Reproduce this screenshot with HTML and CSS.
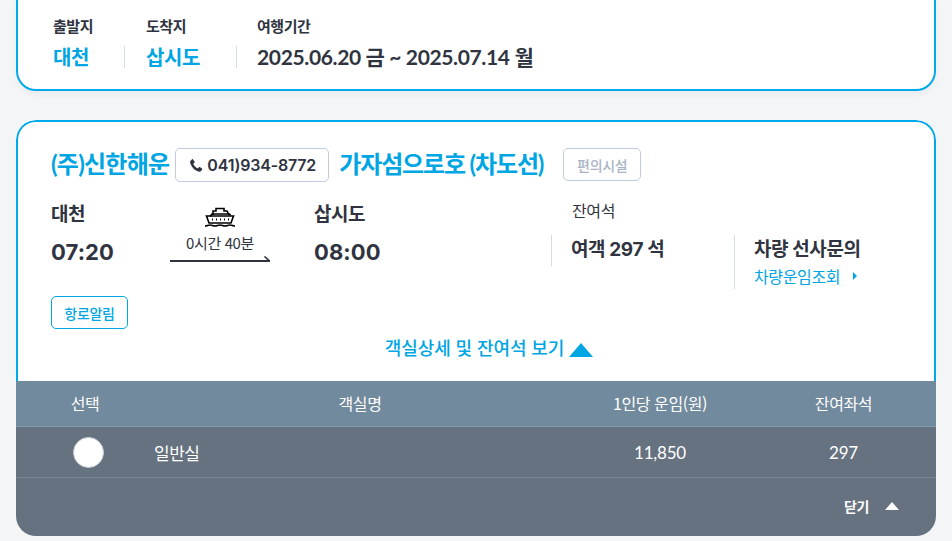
FILE: index.html
```html
<!DOCTYPE html>
<html lang="ko">
<head>
<meta charset="utf-8">
<title>승선권 조회</title>
<link rel="stylesheet" href="styles.css">
</head>
<body>
<section class="summary">
  <div class="sum-col sum-from">
    <div class="sum-label">출발지</div>
    <div class="sum-value blue">대천</div>
  </div>
  <div class="sum-col sum-to">
    <div class="sum-label">도착지</div>
    <div class="sum-value blue">삽시도</div>
  </div>
  <div class="sum-col sum-date">
    <div class="sum-label">여행기간</div>
    <div class="sum-value">2025.06.20 금 ~ 2025.07.14 월</div>
  </div>
</section>

<section class="card">
  <div class="card-body">
    <div class="title-row">
      <span class="title">(주)신한해운</span>
      <span class="phone">
        <svg class="phone-ico" viewBox="0 0 24 24" width="15" height="15"><path fill="#2f3440" d="M6.6 1.9c.5-.3 1.1-.2 1.5.3l2.5 3.6c.3.5.3 1.1-.1 1.5L8.9 8.9c-.3.3-.3.6-.2.9.6 1.4 1.5 2.7 2.6 3.9 1.1 1.1 2.3 2 3.7 2.7.3.1.7.1.9-.2l1.6-1.6c.4-.4 1-.5 1.5-.1l3.4 2.4c.6.4.7 1.2.2 1.7l-1.9 2.2c-.7.8-1.8 1.2-2.9 1-3.4-.6-6.5-2.4-9.2-5.1C6 14 4.1 10.600 3.300 7.300 3 6.200 3.300 5 4.100 4.200z"/></svg>
        041)934-8772
      </span>
      <span class="title ship">가자섬으로호 (차도선)</span>
      <span class="facility">편의시설</span>
    </div>

    <div class="info-row">
      <div class="port port-from">
        <div class="port-name">대천</div>
        <div class="port-time">07:20</div>
      </div>
      <div class="route">
        <svg class="ship-ico" viewBox="0 0 32 22" width="32" height="22" fill="none" stroke="#000" stroke-width="1.6">
          <path d="M9 9V5h3V2.500h8V5h3l2 4"/>
          <path d="M6 10.500 8 8h17.500l1 1.500"/>
          <path d="M2.500 10h27l-2.500 7H5z" />
          <path d="M8 13.500h1M12 13.500h1M16 13.500h1M20 13.500h1M24 13.500h1" stroke-width="2"/>
          <path d="M1 20c2.500 0 2.500-1 5-1s2.500 1 5 1 2.500-1 5-1 2.500 1 5 1 2.500-1 5-1 2.500 1 5 1" stroke-width="1.500"/>
        </svg>
        <div class="duration">0시간 40분</div>
        <svg class="arrow" viewBox="0 0 100 6" width="100" height="6" fill="none" stroke="#2f3440"><path d="M0 5h100" stroke-width="2"/><path d="M94.500 .5 99.500 5" stroke-width="1.600"/></svg>
      </div>
      <div class="port port-to">
        <div class="port-name">삽시도</div>
        <div class="port-time">08:00</div>
      </div>
      <div class="seats">
        <div class="seats-label">잔여석</div>
        <div class="seats-cols">
          <div class="seat-col seat-pass">
            <div class="seat-main">여객 297 석</div>
          </div>
          <div class="seat-col seat-car">
            <div class="seat-main">차량 선사문의</div>
            <div class="seat-link">차량운임조회<span class="tri-right"></span></div>
          </div>
        </div>
      </div>
    </div>

    <div class="alert-row"><span class="alert">항로알림</span></div>
    <div class="toggle"><span>객실상세 및 잔여석 보기</span><span class="tri-up"></span></div>
  </div>

  <div class="table">
    <div class="tr th">
      <div class="c-sel">선택</div>
      <div class="c-name">객실명</div>
      <div class="c-fare">1인당 운임(원)</div>
      <div class="c-left">잔여좌석</div>
    </div>
    <div class="tr td">
      <div class="c-sel"><span class="radio"></span></div>
      <div class="c-name-val">일반실</div>
      <div class="c-fare">11,850</div>
      <div class="c-left">297</div>
    </div>
    <div class="close-row"><span>닫기</span><span class="tri-close"></span></div>
  </div>
</section>
</body>
</html>
```
FILE: styles.css
```css
* { box-sizing: border-box; }
html, body { margin: 0; padding: 0; }
body {
  width: 952px;
  height: 541px;
  overflow: hidden;
  background: #f4f5f7;
  color: #2f3440;
  font-family: "Noto Sans CJK KR", "Noto Sans", sans-serif;
  padding: 0 16px;
}
.blue { color: #00a5e3; }

/* summary card */
.summary {
  height: 111px;
  margin-top: -20px;
  background: #fff;
  border: 2px solid #00a9e9;
  border-radius: 20px;
  box-shadow: 0 4px 6px rgba(0,0,0,.04);
  display: flex;
  padding: 34px 0 0 35px;
}
.sum-col { display: flex; flex-direction: column; }
.sum-from { width: 93px; }
.sum-to { width: 111px; }
.sum-label { font-size: 15px; line-height: 20px; font-weight: 700; letter-spacing: -.45px; color: #2f3440; }
.sum-value {
  margin-top: 9px;
  font-size: 20px;
  line-height: 24px;
  font-weight: 700;
  letter-spacing: -.4px;
  font-family: "Lato", "Noto Sans CJK KR", sans-serif;
  position: relative;
}
.sum-date .sum-value { font-size: 21px; letter-spacing: -.36px; }
.sum-from .sum-value::after, .sum-to .sum-value::after {
  content: "";
  display: block;
  width: 1px;
  height: 22px;
  background: #d5dbe3;
  position: absolute;
  top: 1px;
  right: 21px;
}
.sum-to .sum-value::after { right: 20px; }

/* main card */
.card {
  margin-top: 29px;
  height: 416px;
  border-radius: 20px;
  overflow: hidden;
  background: #fff;
  display: flex;
  flex-direction: column;
}
.card-body {
  height: 261px;
  border: 2px solid #00a9e9;
  border-bottom: 0;
  border-radius: 20px 20px 0 0;
  padding: 26px 0 0 33px;
}
.title-row { display: flex; align-items: center; height: 34px; }
.title { font-size: 24px; font-weight: 700; letter-spacing: -.75px; color: #00a5e3; line-height: 32px; margin-top: -2px; font-family: "Lato", "Noto Sans CJK KR", sans-serif; }
.ship { margin-left: 10px; letter-spacing: -1.15px; }
.phone {
  margin-left: 6px;
  width: 154px;
  height: 34px;
  border: 1px solid #bfcbdf;
  border-radius: 5px;
  display: flex;
  align-items: center;
  padding-left: 12px;
  gap: 4px;
  font-family: "Inter", sans-serif;
  font-size: 16px;
  font-weight: 600;
  letter-spacing: -.2px;
  color: #2f3440;
}
.facility {
  margin-left: 20px;
  margin-top: -1px;
  width: 78px;
  height: 33px;
  border: 1px solid #bfcbdf;
  border-radius: 5px;
  display: flex;
  align-items: center;
  justify-content: center;
  font-size: 14px;
  font-weight: 500;
  letter-spacing: -.3px;
  color: #a9b3c5;
}

.info-row { display: flex; margin-top: 19px; height: 91px; }
.port { display: flex; flex-direction: column; }
.port-from { width: 119px; }
.port-to { width: 258px; }
.port-name { font-size: 19px; line-height: 26px; font-weight: 700; letter-spacing: -.5px; margin-top: -1px; }
.port-time { margin-top: 10px; font-size: 22px; line-height: 32px; font-weight: 700; font-family: "Inter", "Open Sans", sans-serif; letter-spacing: .1px; }
.route { width: 144px; display: flex; flex-direction: column; }
.ship-ico { margin: 5px 0 0 34px; display: block; }
.duration { margin-top: 5px; width: 100px; text-align: center; font-size: 15px; line-height: 20px; letter-spacing: -.4px; }
.arrow { display: block; margin-top: 3px; }
.seats { display: flex; flex-direction: column; margin-left: -21px; width: 380px; }
.seats-label { font-size: 16px; line-height: 22px; letter-spacing: -.4px; margin-left: 21px; margin-top: -2px; }
.seats-cols { display: flex; margin-top: 14px; }
.seat-col { border-left: 1px solid #d5dbe3; padding-left: 19px; }
.seat-pass { width: 183px; height: 31px; }
.seat-car { height: 54px; }
.seat-main { font-size: 19px; line-height: 28px; font-weight: 700; letter-spacing: -.4px; font-family: "Inter", "Noto Sans CJK KR", sans-serif; margin-top: 1px; }
.seat-link { font-size: 16px; line-height: 22px; letter-spacing: -.35px; color: #00a5e3; display: flex; align-items: center; margin-top: 1px; }
.tri-right {
  margin-left: 13px;
  width: 0; height: 0;
  border-left: 4px solid #00a5e3;
  border-top: 4px solid transparent;
  border-bottom: 4px solid transparent;
}

.alert-row { margin-top: 4px; height: 33px; }
.alert {
  display: flex;
  width: 77px;
  height: 33px;
  border: 1px solid #00a5e3;
  border-radius: 5px;
  align-items: center;
  justify-content: center;
  font-size: 14px;
  font-weight: 500;
  letter-spacing: -.3px;
  color: #00a5e3;
}
.toggle {
  margin: 5px 0 0 -33px;
  padding-left: 26px;
  display: flex;
  justify-content: center;
  align-items: center;
  height: 26px;
  font-size: 18px;
  font-weight: 500;
  letter-spacing: -.1px;
  color: #00a5e3;
  gap: 5px;
}
.tri-up {
  width: 0; height: 0;
  border-left: 12px solid transparent;
  border-right: 12px solid transparent;
  border-bottom: 14px solid #00a5e3;
  margin-top: 5px;
}

/* table */
.table { flex: 1; background: #66727f; color: #fff; display: flex; flex-direction: column; }
.tr { display: grid; grid-template-columns: 138px 412px 188px 179px; align-items: center; text-align: center; }
.th { height: 46px; background: #728a9d; border-bottom: 1px solid #7f9ca8; font-size: 16px; letter-spacing: -.4px; }
.th > * { margin-top: -1px; }
.td { height: 51px; border-bottom: 1px solid #7b8793; font-size: 17px; font-family: "Lato", "Noto Sans CJK KR", sans-serif; letter-spacing: -.2px; }
.radio { display: block; width: 31px; height: 31px; margin: 0 0 0 57px; border-radius: 50%; background: #fff; border: 1px solid #c9ced6; }
.c-name-val { text-align: left; font-family: "Noto Sans CJK KR", sans-serif; letter-spacing: -.5px; }
.close-row {
  flex: 1;
  display: flex;
  align-items: center;
  justify-content: flex-end;
  padding: 0 37px 2px 0;
  font-size: 14px;
  font-weight: 700;
  letter-spacing: -.4px;
  gap: 16px;
}
.tri-close {
  width: 0; height: 0;
  border-left: 7px solid transparent;
  border-right: 7px solid transparent;
  border-bottom: 8px solid #fff;
}
```
